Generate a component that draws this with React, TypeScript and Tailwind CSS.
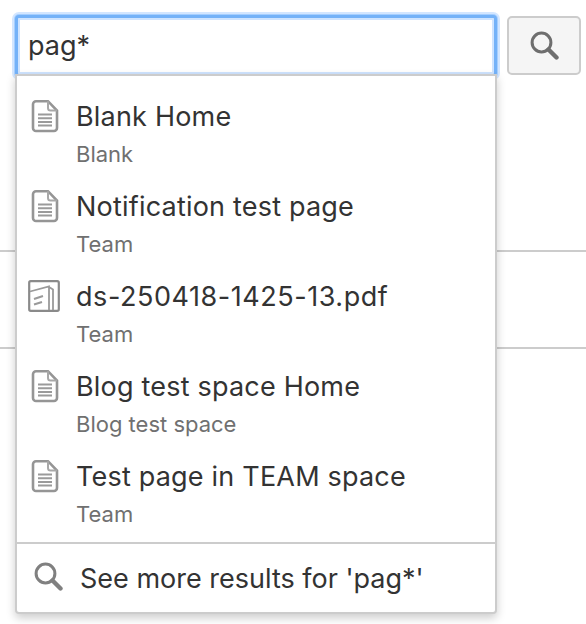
import React from "react";

const results = [
  { title: "Blank Home", space: "Blank", type: "page" },
  { title: "Notification test page", space: "Team", type: "page" },
  { title: "ds-250418-1425-13.pdf", space: "Team", type: "pdf" },
  { title: "Blog test space Home", space: "Blog test space", type: "page" },
  { title: "Test page in TEAM space", space: "Team", type: "page" },
];

const PageIcon = () => (
  <svg width="28" height="34" viewBox="0 0 28 34" fill="none" className="ml-[14px] block">
    <path
      d="M5 2.2h12L26 11.5V29a3 3 0 0 1-3 3H5a3 3 0 0 1-3-3V5.2a3 3 0 0 1 3-3z"
      stroke="#959595"
      strokeWidth="2.6"
    />
    <path d="M17 2.2V9a2.5 2.5 0 0 0 2.5 2.5H26" stroke="#a8a8a8" strokeWidth="2" />
    <path d="M7 15.5h14M7 19.2h14M7 22.9h14M7 26.6h14" stroke="#9a9a9a" strokeWidth="2" />
  </svg>
);

const PdfIcon = () => (
  <svg width="32" height="32" viewBox="0 0 32 32" fill="none" className="ml-[11px] mt-[1px] block">
    <rect x="1.2" y="1.2" width="29.6" height="29.6" rx="1.5" stroke="#8a8a8a" strokeWidth="2.2" />
    <path d="M2 11.5L21 6.5V30M21 7l4 2.5V30" stroke="#9a9a9a" strokeWidth="1.8" />
    <path d="M6 19l9-3M6 24.5l8-2.5" stroke="#9a9a9a" strokeWidth="2.2" />
  </svg>
);

const SearchIcon = ({ color }: { color: string }) => (
  <svg width="29" height="29" viewBox="0 0 29 29" fill="none" className="block">
    <circle cx="11.5" cy="11.5" r="9.4" stroke={color} strokeWidth="3" />
    <path d="M18.5 18.5l8 8" stroke={color} strokeWidth="4.4" strokeLinecap="round" />
  </svg>
);

export default function App() {
  return (
    <div className="relative h-[624px] w-[586px] overflow-hidden bg-white font-['Inter',Arial,sans-serif]">
      {/* Search bar */}
      <div className="flex items-start pl-[15px] pt-[15px]">
        <div className="flex h-[62px] w-[482px] items-center rounded-[4px] border-[3px] border-[#74b2f8] bg-white pb-[2px] pl-[10px] shadow-[0_0_0_1px_#a6cfff,0_0_0_3px_#d3e6ff,inset_0_0_0_2px_#cfe4ff]">
          <span className="text-[27px] leading-none text-[#333333]">pag*</span>
        </div>
        <button className="ml-[10px] mt-[1px] flex h-[59px] w-[74px] items-center justify-center rounded-[5px] border-2 border-[#cccccc] bg-[#f5f5f5]">
          <SearchIcon color="#6e6e6e" />
        </button>
      </div>

      {/* Lines of the page behind the dropdown */}
      <div className="mt-[173px] h-[2px] w-full bg-[#cccccc]" />
      <div className="mt-[95px] h-[2px] w-full bg-[#cccccc]" />

      {/* Dropdown */}
      <div className="absolute left-[15px] top-[74px] w-[482px] rounded-b-[4px] border-2 border-[#cccccc] bg-white shadow-[0_4px_10px_rgba(0,0,0,0.2)]">
        <ul className="pt-[16px]">
          {results.map((r) => (
            <li key={r.title} className="flex h-[90px] pt-[7px]">
              <div className="w-[59px] shrink-0">
                {r.type === "pdf" ? <PdfIcon /> : <PageIcon />}
              </div>
              <div className="flex-1">
                <div className={r.type === "pdf" ? "text-[27px] leading-[36px] tracking-[0.55px] text-[#333333]" : "text-[27px] leading-[36px] tracking-[0.2px] text-[#333333]"}>
                  {r.title}
                </div>
                <div className="mt-[5px] text-[22px] leading-[28px] text-[#707070]">{r.space}</div>
              </div>
            </li>
          ))}
        </ul>
        <div className="flex h-[70px] items-center border-t-2 border-[#cccccc] pl-[17px]">
          <div className="mb-[4px]">
            <SearchIcon color="#808080" />
          </div>
          <span className="ml-[17px] text-[27px] leading-none text-[#333333]">See more results for 'pag*'</span>
        </div>
      </div>
    </div>
  );
}
